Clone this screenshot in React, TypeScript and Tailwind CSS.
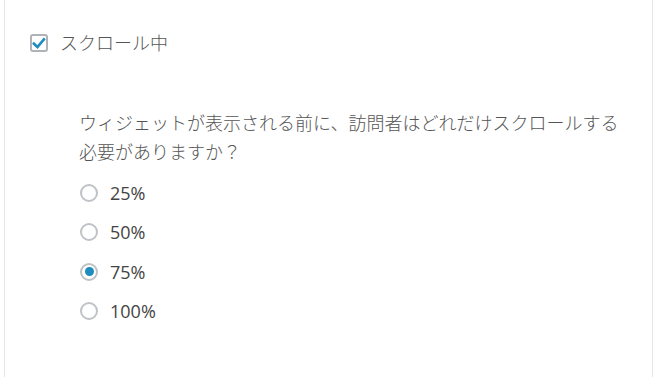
import React from 'react';

const options = ['25%', '50%', '75%', '100%'];

const Radio = ({ checked }: { checked: boolean }) => (
  <span className="flex h-[18px] w-[18px] min-w-[18px] shrink-0 items-center justify-center rounded-full border-2 border-[#bfc2c6] bg-white">
    {checked && <span className="h-[9px] w-[9px] rounded-full bg-[#1e8cbe]" />}
  </span>
);

export default function App() {
  return (
    <div className="h-[377px] w-[656px] overflow-hidden bg-white font-['Open_Sans','Noto_Sans_CJK_JP',sans-serif] text-[#555]">
      <div className="ml-[4px] h-full w-[649px] border-x border-[#e2e4e7] pl-[25px] pt-[34px]">
        {/* scroll trigger toggle */}
        <label className="flex h-[18px] items-center gap-[12px]">
          <span className="flex h-[18px] w-[18px] min-w-[18px] shrink-0 items-center justify-center rounded-[3px] border-2 border-[#afb3b7] bg-white">
            <svg width="15" height="15" viewBox="0 0 16 16" fill="none">
              <path d="M2.2 8.2 L6.2 12 L13.6 3.2" stroke="#1e8cbe" strokeWidth="3" strokeLinecap="square" />
            </svg>
          </span>
          <span className="text-[18px] font-light leading-none">スクロール中</span>
        </label>

        <div className="ml-[49px] mt-[57px]">
          <p className="whitespace-nowrap text-[18px] font-light leading-[29px]">
            ウィジェットが表示される前に、訪問者はどれだけスクロールする
            <br />
            必要がありますか？
          </p>
          <div className="mt-[6px] flex flex-col">
            {options.map((o) => (
              <div key={o} className="ml-[1px] flex h-[39.5px] items-center gap-[12px]">
                <Radio checked={o === '75%'} />
                <span className="text-[18px] leading-none text-[#444]">{o}</span>
              </div>
            ))}
          </div>
        </div>
      </div>
    </div>
  );
}
